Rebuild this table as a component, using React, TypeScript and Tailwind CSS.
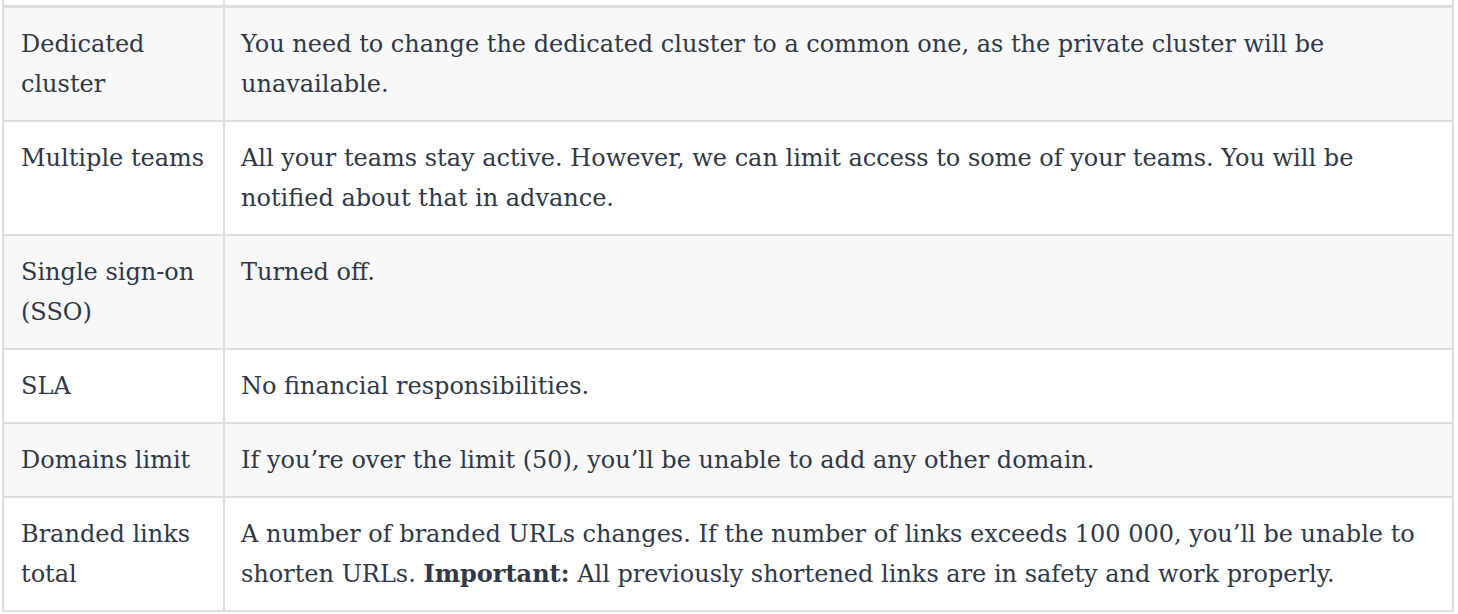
const rows: { label: React.ReactNode; text: React.ReactNode }[] = [
  {
    label: (
      <>
        Dedicated
        <br />
        cluster
      </>
    ),
    text: (
      <>
        You need to change the dedicated cluster to a common one, as the private cluster will be
        <br />
        unavailable.
      </>
    ),
  },
  {
    label: "Multiple teams",
    text: (
      <>
        All your teams stay active. However, we can limit access to some of your teams. You will be
        <br />
        notified about that in advance.
      </>
    ),
  },
  {
    label: (
      <>
        Single sign-on
        <br />
        (SSO)
      </>
    ),
    text: "Turned off.",
  },
  { label: "SLA", text: "No financial responsibilities." },
  {
    label: "Domains limit",
    text: "If you’re over the limit (50), you’ll be unable to add any other domain.",
  },
  {
    label: (
      <>
        Branded links
        <br />
        total
      </>
    ),
    text: (
      <>
        A number of branded URLs changes. If the number of links exceeds 100 000, you’ll be unable to
        <br />
        shorten URLs. <strong className="font-bold">Important:</strong> All previously shortened links
        are in safety and work properly.
      </>
    ),
  },
];

export default function App() {
  return (
    <div className="min-h-screen bg-white text-[#313846] [font-family:'DejaVu_Serif','Liberation_Serif',serif] text-[24px] leading-[40px]">
      <div className="ml-[2px] w-[1452px] border-x-2 border-b-2 border-[#dedede]">
        <div className="flex h-[5px] border-b-[3px] border-[#dedede] box-content">
          <div className="w-[221px] shrink-0 border-r-2 border-[#dedede]" />
          <div className="flex-1" />
        </div>
        {rows.map((row, i) => (
          <div
            key={i}
            className={`flex ${i > 0 ? "border-t-2 border-[#dedede]" : ""} ${
              i % 2 === 0 ? "bg-[#f8f8f8]" : "bg-white"
            }`}
          >
            <div className="w-[221px] shrink-0 border-r-2 border-[#dedede] py-4 pl-[17px] pr-2 whitespace-nowrap">
              {row.label}
            </div>
            <div className="flex-1 py-4 px-4 whitespace-nowrap">{row.text}</div>
          </div>
        ))}
      </div>
    </div>
  );
}
